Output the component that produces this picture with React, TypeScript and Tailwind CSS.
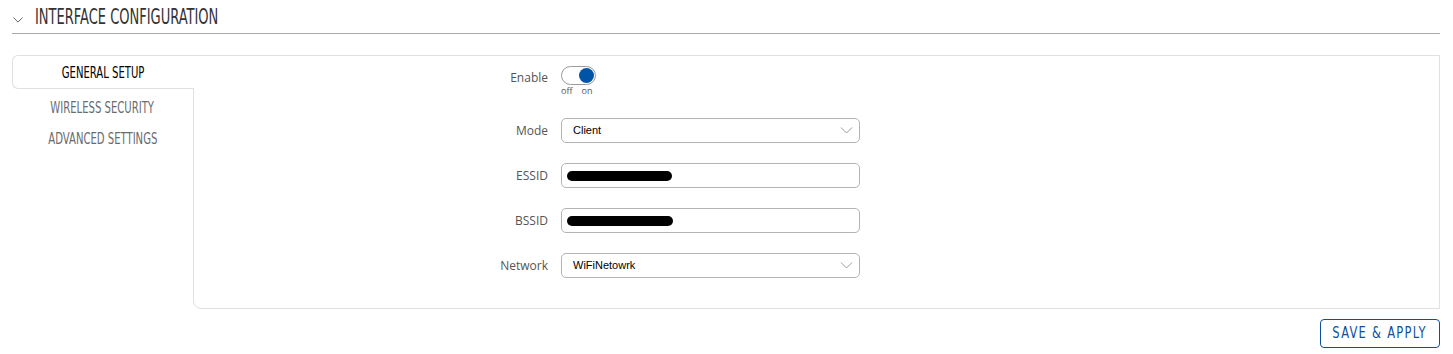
import React from 'react';

const cond = { fontFamily: '"Liberation Sans Narrow", "DejaVu Sans Condensed", sans-serif' };
const label = { fontFamily: '"Open Sans", "Liberation Sans", sans-serif' };
const arial = { fontFamily: '"Liberation Sans", Arial, sans-serif' };

function Chevron({ className }: { className?: string }) {
  return (
    <svg className={className} viewBox="0 0 12 7" fill="none" stroke="currentColor" strokeWidth={1}>
      <path d="M0.5 0.5L6 6L11.5 0.5" />
    </svg>
  );
}

function Row({ name, children, className = '', labelClass = '' }: { name: string; children: React.ReactNode; className?: string; labelClass?: string }) {
  return (
    <div className={`flex items-center ${className}`}>
      <div className={`w-[367px] pr-[13px] text-right text-[12px] text-[#555] ${labelClass}`} style={label}>
        {name}
      </div>
      {children}
    </div>
  );
}

function Select({ value }: { value: string }) {
  return (
    <div className="w-[299px] h-[25px] border border-[#b4b4b4] rounded-[5px] flex items-center justify-between pl-[11px] pr-[6px]">
      <span className="text-[11px] text-black" style={arial}>{value}</span>
      <Chevron className="w-[13px] h-[7px] text-[#999]" />
    </div>
  );
}

function Hidden({ w }: { w: number }) {
  return (
    <div className="w-[299px] h-[25px] border border-[#b4b4b4] rounded-[5px] flex items-center pl-[5px]">
      <div className="h-[10px] bg-black rounded-full" style={{ width: w }} />
    </div>
  );
}

export default function App() {
  return (
    <div className="bg-white w-[1453px] h-[354px] pl-[12px] pr-[13px]">
      <div className="flex items-center h-[34px] border-b border-[#a8a8a8] pt-[2px]">
        <Chevron className="w-[10px] h-[6px] text-[#444] ml-[1px] mt-[4px]" />
        <h2 className="ml-[12px] text-[21px] text-[#333] origin-left scale-x-[0.69] whitespace-nowrap" style={cond}>
          INTERFACE CONFIGURATION
        </h2>
      </div>

      <div className="flex mt-[21px]">
        <div className="w-[181px] shrink-0 flex flex-col" style={cond}>
          <div className="relative z-10 -mr-px h-[34px] bg-white border border-r-0 border-[#e0e0e0] rounded-l-[6px] flex items-center justify-center text-[16px] text-black pt-[1px]">
            <span className="scale-x-[0.7] whitespace-nowrap">GENERAL SETUP</span>
          </div>
          <div className="h-[34px] pt-[4px] flex items-center justify-center text-[16px] text-[#6b6b6b]">
            <span className="scale-x-[0.7] whitespace-nowrap">WIRELESS SECURITY</span>
          </div>
          <div className="h-[31px] pt-[1px] flex items-center justify-center text-[16px] text-[#6b6b6b]">
            <span className="scale-x-[0.7] whitespace-nowrap">ADVANCED SETTINGS</span>
          </div>
        </div>

        <div className="flex-1 border border-[#e0e0e0] rounded-bl-[8px] pt-[10px] pb-[30px]">
          <Row name="Enable" className="items-start" labelClass="pt-[3px]">
            <div className="flex flex-col">
              <div className="w-[35px] h-[19px] border border-[#9a9a9a] rounded-full flex items-center justify-end pr-[1px]">
                <div className="w-[15px] h-[15px] rounded-full bg-[#0054a6]" />
              </div>
              <div className="flex gap-[9px] text-[9px] leading-[10px] text-[#555] mt-[1px]" style={label}>
                <span>off</span>
                <span>on</span>
              </div>
            </div>
          </Row>
          <div className="h-[22px]" />
          <Row name="Mode">
            <Select value="Client" />
          </Row>
          <Row name="ESSID" className="mt-[20px]">
            <Hidden w={105} />
          </Row>
          <Row name="BSSID" className="mt-[20px]">
            <Hidden w={106} />
          </Row>
          <Row name="Network" className="mt-[20px]">
            <Select value="WiFiNetowrk" />
          </Row>
        </div>
      </div>

      <div className="flex justify-end mt-[10px]">
        <button className="w-[120px] h-[29px] border border-[#0e4fa0] rounded-[4px] text-[#0e4fa0] text-[15px] flex items-center justify-center" style={cond}>
          <span className="tracking-[1.5px] scale-x-[0.85]">SAVE &amp; APPLY</span>
        </button>
      </div>
    </div>
  );
}
